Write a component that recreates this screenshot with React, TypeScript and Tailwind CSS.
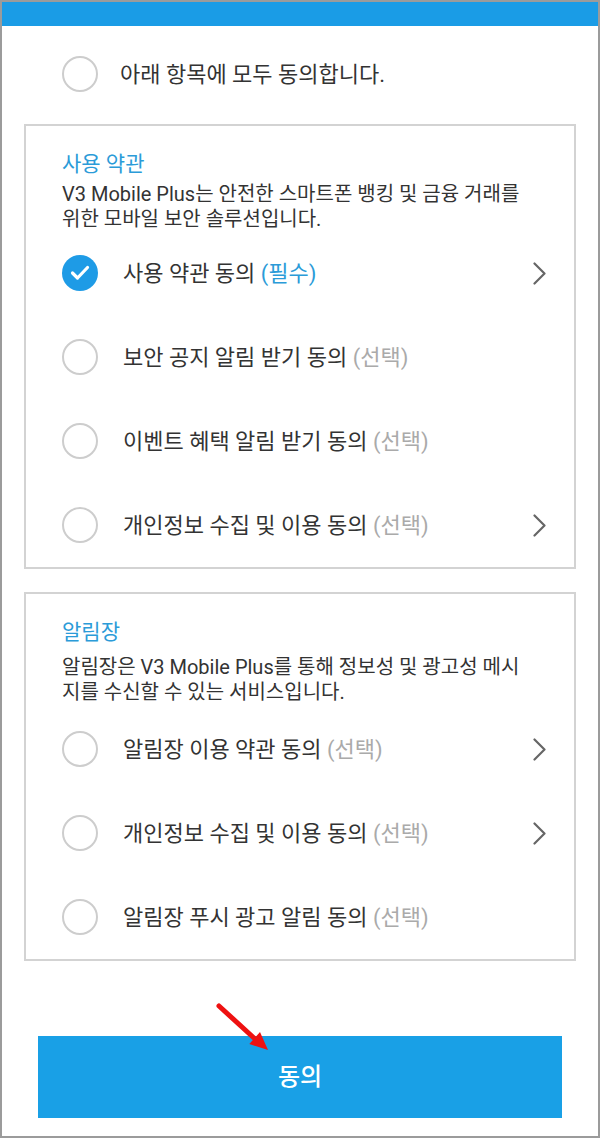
import React from 'react';

type Item = {
  label: string;
  tag: '필수' | '선택';
  checked?: boolean;
  more?: boolean;
};

const termsItems: Item[] = [
  { label: '사용 약관 동의', tag: '필수', checked: true, more: true },
  { label: '보안 공지 알림 받기 동의', tag: '선택' },
  { label: '이벤트 혜택 알림 받기 동의', tag: '선택' },
  { label: '개인정보 수집 및 이용 동의', tag: '선택', more: true },
];

const noticeItems: Item[] = [
  { label: '알림장 이용 약관 동의', tag: '선택', more: true },
  { label: '개인정보 수집 및 이용 동의', tag: '선택', more: true },
  { label: '알림장 푸시 광고 알림 동의', tag: '선택' },
];

function CheckCircle({ checked }: { checked?: boolean }) {
  if (checked) {
    return (
      <div className="w-9 h-9 shrink-0 rounded-full bg-[#1e9be6] flex items-center justify-center">
        <svg width="36" height="36" viewBox="0 0 36 36" fill="none">
          <polyline points="10.5,18 15.5,23 25.5,12.5" stroke="white" strokeWidth={3.2} strokeLinecap="round" strokeLinejoin="round" />
        </svg>
      </div>
    );
  }
  return <div className="w-9 h-9 shrink-0 rounded-full border-[2.5px] border-[#cdcdcd]" />;
}

function Chevron() {
  return (
    <svg width="13" height="23" viewBox="0 0 13 23" fill="none" className="shrink-0">
      <polyline points="1.5,1.5 11.5,11.5 1.5,21.5" stroke="#666666" strokeWidth={2.2} strokeLinecap="round" strokeLinejoin="round" />
    </svg>
  );
}

function Row({ item }: { item: Item }) {
  return (
    <div className="h-[84px] flex items-center pl-[36px] pr-[28px]">
      <CheckCircle checked={item.checked} />
      <div className="ml-[25px] flex-1 text-[22px] text-[#333333] whitespace-nowrap">
        {item.label}{' '}
        <span className={item.tag === '필수' ? 'text-[#2b9bd8]' : 'text-[#aaaaaa]'}>({item.tag})</span>
      </div>
      {item.more && <Chevron />}
    </div>
  );
}

function Section({ title, desc, items, descGap, headPad }: { title: string; desc: string[]; items: Item[]; descGap: string; headPad: string }) {
  return (
    <div className="mx-[22px] border-2 border-[#d3d3d3]">
      <div className={`pt-[24px] px-[36px] ${headPad}`}>
        <div className="text-[21px] leading-[29px] text-[#2b9bd8]">{title}</div>
        <div className={`${descGap} text-[20px] leading-[24.5px] text-[#333333] whitespace-nowrap`}>
          {desc.map((d) => (
            <div key={d}>{d}</div>
          ))}
        </div>
      </div>
      {items.map((it) => (
        <Row key={it.label + it.tag} item={it} />
      ))}
    </div>
  );
}

export default function App() {
  return (
    <div
      className="relative w-[600px] h-[1138px] border-2 border-[#9b9b9b] bg-white flex flex-col"
      style={{ fontFamily: 'Roboto, "Noto Sans CJK KR", sans-serif' }}
    >
      {/* top bar */}
      <div className="h-[24px] bg-[#1a9ce6]" />

      {/* agree all */}
      <div className="mt-[30px] flex items-center pl-[60px]">
        <CheckCircle />
        <div className="ml-[22px] text-[22px] text-[#333333]">아래 항목에 모두 동의합니다.</div>
      </div>

      <div className="mt-[32px]">
        <Section
          title="사용 약관"
          desc={['V3 Mobile Plus는 안전한 스마트폰 뱅킹 및 금융 거래를', '위한 모바일 보안 솔루션입니다.']}
          items={termsItems}
          descGap="mt-[3px]"
          headPad="pb-0"
        />
      </div>

      <div className="mt-[23px]">
        <Section
          title="알림장"
          desc={['알림장은 V3 Mobile Plus를 통해 정보성 및 광고성 메시', '지를 수신할 수 있는 서비스입니다.']}
          items={noticeItems}
          descGap="mt-[8px]"
          headPad="pb-[3px]"
        />
      </div>

      {/* agree button */}
      <div className="mt-auto mb-[18px] mx-[36px] h-[82px] bg-[#19a0e6] flex items-center justify-center">
        <span className="text-[24px] font-medium text-white">동의</span>
      </div>

      {/* red pointer arrow */}
      <svg className="absolute left-[203px] top-[993px]" width="70" height="65" viewBox="0 0 70 65" fill="none">
        <line x1="14" y1="11" x2="49" y2="43" stroke="#ee1111" strokeWidth={5} strokeLinecap="round" />
        <polygon points="63,55 44.3,49 55,37" fill="#ee1111" />
      </svg>
    </div>
  );
}
